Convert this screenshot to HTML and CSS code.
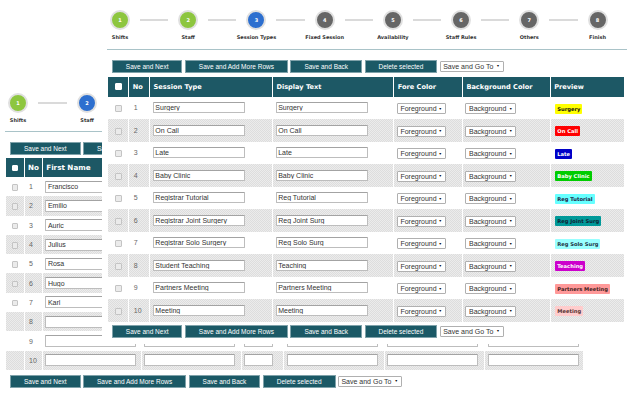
FILE: index.html
```html
<!DOCTYPE html>
<html lang="en">
<head>
    <meta charset="UTF-8">
    <meta name="viewport" content="width=device-width, initial-scale=1.0">
    <title>Setup Wizard - Session Types</title>
    <link rel="stylesheet" href="styles.css">
</head>
<body>
    <!-- Staff step (window behind) -->
    <div class="page">
        <div class="wizard wizard-back">
            <div class="step done"><span class="dot">1</span><span class="step-label">Shifts</span></div>
            <span class="link"></span>
            <div class="step current"><span class="dot">2</span><span class="step-label">Staff</span></div>
            <span class="link"></span>
            <div class="step"><span class="dot">3</span><span class="step-label">Session Types</span></div>
            <span class="link"></span>
            <div class="step"><span class="dot">4</span><span class="step-label">Fixed Session</span></div>
            <span class="link"></span>
            <div class="step"><span class="dot">5</span><span class="step-label">Availability</span></div>
            <span class="link"></span>
            <div class="step"><span class="dot">6</span><span class="step-label">Staff Rules</span></div>
            <span class="link"></span>
            <div class="step"><span class="dot">7</span><span class="step-label">Others</span></div>
            <span class="link"></span>
            <div class="step"><span class="dot">8</span><span class="step-label">Finish</span></div>
        </div>
        <div class="wizard-line wizard-line-back"></div>

        <div class="toolbar toolbar-back-top">
            <button class="btn">Save and Next</button>
            <button class="btn">Save and Add More Rows</button>
            <button class="btn">Save and Back</button>
            <button class="btn">Delete selected</button>
            <span class="dd"><select class="dd-go"><option>Save and Go To</option></select></span>
        </div>

        <table class="grid grid-staff">
            <colgroup>
                <col class="s1"><col class="s2"><col class="s3"><col class="s4">
                <col class="s5"><col class="s6"><col class="s7"><col class="s8">
            </colgroup>
            <tr>
                <th class="check"><input type="checkbox" class="chk chk-head"></th>
                <th>No</th><th>First Name</th><th>Last Name</th><th>Init</th>
                <th>Job Title</th><th>Email</th><th>Phone</th>
            </tr>
            <tr>
                <td class="check"><input type="checkbox" class="chk"></td><td class="num">1</td>
                <td><input type="text" value="Francisco"></td><td><input type="text"></td><td><input type="text" class="sm"></td>
                <td><input type="text"></td><td><input type="text"></td><td><input type="text" class="lg"></td>
            </tr>
            <tr class="alt">
                <td class="check"><input type="checkbox" class="chk"></td><td class="num">2</td>
                <td><input type="text" value="Emilio"></td><td><input type="text"></td><td><input type="text" class="sm"></td>
                <td><input type="text"></td><td><input type="text"></td><td><input type="text" class="lg"></td>
            </tr>
            <tr>
                <td class="check"><input type="checkbox" class="chk"></td><td class="num">3</td>
                <td><input type="text" value="Auric"></td><td><input type="text"></td><td><input type="text" class="sm"></td>
                <td><input type="text"></td><td><input type="text"></td><td><input type="text" class="lg"></td>
            </tr>
            <tr class="alt">
                <td class="check"><input type="checkbox" class="chk"></td><td class="num">4</td>
                <td><input type="text" value="Julius"></td><td><input type="text"></td><td><input type="text" class="sm"></td>
                <td><input type="text"></td><td><input type="text"></td><td><input type="text" class="lg"></td>
            </tr>
            <tr>
                <td class="check"><input type="checkbox" class="chk"></td><td class="num">5</td>
                <td><input type="text" value="Rosa"></td><td><input type="text"></td><td><input type="text" class="sm"></td>
                <td><input type="text"></td><td><input type="text"></td><td><input type="text" class="lg"></td>
            </tr>
            <tr class="alt">
                <td class="check"><input type="checkbox" class="chk"></td><td class="num">6</td>
                <td><input type="text" value="Hugo"></td><td><input type="text"></td><td><input type="text" class="sm"></td>
                <td><input type="text"></td><td><input type="text"></td><td><input type="text" class="lg"></td>
            </tr>
            <tr>
                <td class="check"><input type="checkbox" class="chk"></td><td class="num">7</td>
                <td><input type="text" value="Karl"></td><td><input type="text"></td><td><input type="text" class="sm"></td>
                <td><input type="text"></td><td><input type="text"></td><td><input type="text" class="lg"></td>
            </tr>
            <tr class="alt">
                <td class="check"></td><td class="num">8</td>
                <td><input type="text"></td><td><input type="text"></td><td><input type="text" class="sm"></td>
                <td><input type="text"></td><td><input type="text"></td><td><input type="text" class="lg"></td>
            </tr>
            <tr>
                <td class="check"></td><td class="num">9</td>
                <td><input type="text"></td><td><input type="text"></td><td><input type="text" class="sm"></td>
                <td><input type="text"></td><td><input type="text"></td><td><input type="text" class="lg"></td>
            </tr>
            <tr class="alt">
                <td class="check"></td><td class="num">10</td>
                <td><input type="text"></td><td><input type="text"></td><td><input type="text" class="sm"></td>
                <td><input type="text"></td><td><input type="text"></td><td><input type="text" class="lg"></td>
            </tr>
        </table>

        <div class="toolbar toolbar-back-bottom">
            <button class="btn">Save and Next</button>
            <button class="btn">Save and Add More Rows</button>
            <button class="btn">Save and Back</button>
            <button class="btn">Delete selected</button>
            <span class="dd"><select class="dd-go"><option>Save and Go To</option></select></span>
        </div>
    </div>

    <!-- Session Types step (window in front) -->
    <div class="panel">
        <div class="wizard wizard-main">
            <div class="step done"><span class="dot">1</span><span class="step-label">Shifts</span></div>
            <span class="link"></span>
            <div class="step done"><span class="dot">2</span><span class="step-label">Staff</span></div>
            <span class="link"></span>
            <div class="step current"><span class="dot">3</span><span class="step-label">Session Types</span></div>
            <span class="link"></span>
            <div class="step"><span class="dot">4</span><span class="step-label">Fixed Session</span></div>
            <span class="link"></span>
            <div class="step"><span class="dot">5</span><span class="step-label">Availability</span></div>
            <span class="link"></span>
            <div class="step"><span class="dot">6</span><span class="step-label">Staff Rules</span></div>
            <span class="link"></span>
            <div class="step"><span class="dot">7</span><span class="step-label">Others</span></div>
            <span class="link"></span>
            <div class="step"><span class="dot">8</span><span class="step-label">Finish</span></div>
        </div>
        <div class="wizard-line"></div>

        <div class="toolbar toolbar-top">
            <button class="btn">Save and Next</button>
            <button class="btn">Save and Add More Rows</button>
            <button class="btn">Save and Back</button>
            <button class="btn">Delete selected</button>
            <span class="dd"><select class="dd-go"><option>Save and Go To</option></select></span>
        </div>

        <table class="grid grid-sessions">
            <colgroup>
                <col class="c1"><col class="c2"><col class="c3"><col class="c4">
                <col class="c5"><col class="c6"><col class="c7">
            </colgroup>
            <tr>
                <th class="check"><input type="checkbox" class="chk chk-head"></th>
                <th>No</th>
                <th>Session Type</th>
                <th>Display Text</th>
                <th>Fore Color</th>
                <th>Background Color</th>
                <th>Preview</th>
            </tr>
            <tr>
                <td class="check"><input type="checkbox" class="chk"></td><td class="num">1</td>
                <td><input type="text" value="Surgery"></td><td><input type="text" value="Surgery"></td>
                <td><span class="dd"><select class="dd-fore"><option>Foreground</option></select></span></td>
                <td><span class="dd"><select class="dd-back"><option>Background</option></select></span></td>
                <td><span class="badge" style="background:#ffff00;color:#111;">Surgery</span></td>
            </tr>
            <tr class="alt">
                <td class="check"><input type="checkbox" class="chk"></td><td class="num">2</td>
                <td><input type="text" value="On Call"></td><td><input type="text" value="On Call"></td>
                <td><span class="dd"><select class="dd-fore"><option>Foreground</option></select></span></td>
                <td><span class="dd"><select class="dd-back"><option>Background</option></select></span></td>
                <td><span class="badge" style="background:#ff0000;color:#fff;">On Call</span></td>
            </tr>
            <tr>
                <td class="check"><input type="checkbox" class="chk"></td><td class="num">3</td>
                <td><input type="text" value="Late"></td><td><input type="text" value="Late"></td>
                <td><span class="dd"><select class="dd-fore"><option>Foreground</option></select></span></td>
                <td><span class="dd"><select class="dd-back"><option>Background</option></select></span></td>
                <td><span class="badge" style="background:#0000c8;color:#fff;">Late</span></td>
            </tr>
            <tr class="alt">
                <td class="check"><input type="checkbox" class="chk"></td><td class="num">4</td>
                <td><input type="text" value="Baby Clinic"></td><td><input type="text" value="Baby Clinic"></td>
                <td><span class="dd"><select class="dd-fore"><option>Foreground</option></select></span></td>
                <td><span class="dd"><select class="dd-back"><option>Background</option></select></span></td>
                <td><span class="badge" style="background:#00cc00;color:#fff;">Baby Clinic</span></td>
            </tr>
            <tr>
                <td class="check"><input type="checkbox" class="chk"></td><td class="num">5</td>
                <td><input type="text" value="Registrar Tutorial"></td><td><input type="text" value="Reg Tutorial"></td>
                <td><span class="dd"><select class="dd-fore"><option>Foreground</option></select></span></td>
                <td><span class="dd"><select class="dd-back"><option>Background</option></select></span></td>
                <td><span class="badge" style="background:#66ffff;color:#224;">Reg Tutorial</span></td>
            </tr>
            <tr class="alt">
                <td class="check"><input type="checkbox" class="chk"></td><td class="num">6</td>
                <td><input type="text" value="Registrar Joint Surgery"></td><td><input type="text" value="Reg Joint Surg"></td>
                <td><span class="dd"><select class="dd-fore"><option>Foreground</option></select></span></td>
                <td><span class="dd"><select class="dd-back"><option>Background</option></select></span></td>
                <td><span class="badge" style="background:#009999;color:#123;">Reg Joint Surg</span></td>
            </tr>
            <tr>
                <td class="check"><input type="checkbox" class="chk"></td><td class="num">7</td>
                <td><input type="text" value="Registrar Solo Surgery"></td><td><input type="text" value="Reg Solo Surg"></td>
                <td><span class="dd"><select class="dd-fore"><option>Foreground</option></select></span></td>
                <td><span class="dd"><select class="dd-back"><option>Background</option></select></span></td>
                <td><span class="badge" style="background:#99ffff;color:#234;">Reg Solo Surg</span></td>
            </tr>
            <tr class="alt">
                <td class="check"><input type="checkbox" class="chk"></td><td class="num">8</td>
                <td><input type="text" value="Student Teaching"></td><td><input type="text" value="Teaching"></td>
                <td><span class="dd"><select class="dd-fore"><option>Foreground</option></select></span></td>
                <td><span class="dd"><select class="dd-back"><option>Background</option></select></span></td>
                <td><span class="badge" style="background:#cc00cc;color:#fff;">Teaching</span></td>
            </tr>
            <tr>
                <td class="check"><input type="checkbox" class="chk"></td><td class="num">9</td>
                <td><input type="text" value="Partners Meeting"></td><td><input type="text" value="Partners Meeting"></td>
                <td><span class="dd"><select class="dd-fore"><option>Foreground</option></select></span></td>
                <td><span class="dd"><select class="dd-back"><option>Background</option></select></span></td>
                <td><span class="badge" style="background:#ff9999;color:#422;">Partners Meeting</span></td>
            </tr>
            <tr class="alt">
                <td class="check"><input type="checkbox" class="chk"></td><td class="num">10</td>
                <td><input type="text" value="Meeting"></td><td><input type="text" value="Meeting"></td>
                <td><span class="dd"><select class="dd-fore"><option>Foreground</option></select></span></td>
                <td><span class="dd"><select class="dd-back"><option>Background</option></select></span></td>
                <td><span class="badge" style="background:#ffcccc;color:#533;">Meeting</span></td>
            </tr>
        </table>

        <div class="toolbar toolbar-bottom">
            <button class="btn">Save and Next</button>
            <button class="btn">Save and Add More Rows</button>
            <button class="btn">Save and Back</button>
            <button class="btn">Delete selected</button>
            <span class="dd"><select class="dd-go"><option>Save and Go To</option></select></span>
        </div>
    </div>
</body>
</html>
```

FILE: styles.css
```css
/* General Styles */
* {
    box-sizing: border-box;
}

body {
    margin: 0;
    width: 627px;
    height: 393px;
    overflow: hidden;
    position: relative;
    background-color: #ffffff;
    font-family: 'Liberation Sans', Arial, sans-serif;
    color: #333333;
}

/* Staff page (behind) */
.page {
    padding-top: 93px;
}

/* Session types window (in front) */
.panel {
    position: absolute;
    left: 102px;
    top: 0;
    width: 525px;
    height: 344px;
    padding-top: 10px;
    background-color: #ffffff;
}

/* Wizard steps */
.wizard {
    display: flex;
    align-items: flex-start;
}

.wizard-main {
    width: 513.5px;
}

.wizard-back {
    width: 519px;
}

.step {
    flex: none;
    width: 36px;
    display: flex;
    flex-direction: column;
    align-items: center;
}

.dot {
    width: 20px;
    height: 20px;
    border-radius: 50%;
    border: 2.5px solid #e0e0e0;
    background-color: #666666;
    color: #ffffff;
    font: bold 5px 'DejaVu Sans', sans-serif;
    display: flex;
    align-items: center;
    justify-content: center;
}

.step.done .dot {
    background-color: #8dc63f;
}

.step.current .dot {
    background-color: #2d6fcf;
}

.step-label {
    margin-top: 3.5px;
    font: bold 5px/7px 'DejaVu Sans', sans-serif;
    color: #333333;
    white-space: nowrap;
}

.link {
    flex: 1;
    height: 2px;
    margin: 9px 2px 0;
    background-color: #dadada;
}

.wizard-line {
    height: 1px;
    margin: 8px 0 0 5px;
    background-color: #a9c3c8;
}

.wizard-line-back {
    margin: 7.2px 44px 0 5px;
}

/* Button bars */
.toolbar {
    display: flex;
    gap: 2.4px;
    height: 13.5px;
}

.toolbar-top {
    margin: 10px 0 0 9.8px;
}

.toolbar-bottom {
    margin: 3px 0 0 9.8px;
}

.toolbar-back-top {
    margin: 10.3px 0 0 10px;
}

.toolbar-back-bottom {
    margin: 5px 0 0 10px;
}

.btn {
    height: 13.5px;
    padding: 0 13px;
    border: 1px solid #7fa2aa;
    background-color: #1b5966;
    color: #ffffff;
    font-family: 'Liberation Sans', Arial, sans-serif;
    font-size: 6.5px;
    cursor: pointer;
}

/* Drop downs */
.dd {
    position: relative;
    display: inline-block;
    vertical-align: middle;
}

.dd select {
    appearance: none;
    -webkit-appearance: none;
    display: block;
    height: 11px;
    padding: 0 0 0 2.5px;
    border: 1px solid #b0b0b0;
    border-radius: 1px;
    background-color: #ffffff;
    color: #333333;
    font-family: 'Liberation Sans', Arial, sans-serif;
    font-size: 7px;
    line-height: 9px;
}

.dd::after {
    content: "\25BC";
    position: absolute;
    right: 4px;
    top: 3.5px;
    font-size: 3.5px;
    line-height: 4px;
    color: #111111;
    pointer-events: none;
}

.dd-fore {
    width: 49px;
}

.dd-back {
    width: 51px;
}

.dd-go {
    width: 64px;
    margin-top: 1px;
}

.toolbar .dd {
    vertical-align: top;
}

.toolbar .dd::after {
    top: 4.5px;
}

/* Grids */
.grid {
    table-layout: fixed;
    border-collapse: separate;
}

.grid th {
    height: 20px;
    padding: 0 0 0 3.5px;
    background-color: #1d5865;
    color: #ffffff;
    font: bold 6.6px 'DejaVu Sans', sans-serif;
    text-align: left;
    white-space: nowrap;
    overflow: hidden;
}

.grid td {
    padding: 0 0 0 2.6px;
    vertical-align: middle;
    white-space: nowrap;
    overflow: hidden;
}

.grid tr.alt td {
    background: repeating-conic-gradient(#dddddd 0 25%, #ececec 0 50%) 0 0 / 2px 2px;
}

.grid .check {
    padding: 0;
    text-align: center;
}

.grid .num {
    padding-left: 4.5px;
    font-size: 7px;
    color: #666666;
}

.grid input[type="text"] {
    display: block;
    width: 92px;
    height: 11px;
    padding: 0 0 0 1.7px;
    border: 1px solid #bdbdbd;
    border-top-color: #a3a3a3;
    border-radius: 1px;
    background-color: #ffffff;
    color: #333333;
    font-family: 'Liberation Sans', Arial, sans-serif;
    font-size: 7px;
    line-height: 9px;
}

.chk {
    appearance: none;
    -webkit-appearance: none;
    display: inline-block;
    vertical-align: middle;
    width: 7px;
    height: 7px;
    margin: 0;
    border: 1px solid #c4c4c4;
    border-radius: 1px;
    background-color: #ebebeb;
}

.chk-head {
    border-color: #ffffff;
    background-color: #ffffff;
}

/* Session types grid */
.grid-sessions {
    width: 518.7px;
    margin: 3.5px 0 0 4.8px;
    border-spacing: 1.6px 0;
}

.grid-sessions td {
    height: 22.5px;
}

.grid-sessions .c1 { width: 20.3px; }
.grid-sessions .c2 { width: 19.6px; }
.grid-sessions .c3 { width: 120.6px; }
.grid-sessions .c4 { width: 119.2px; }
.grid-sessions .c5 { width: 66.9px; }
.grid-sessions .c6 { width: 85.9px; }
.grid-sessions .c7 { width: 73px; }

.badge {
    display: inline-block;
    vertical-align: middle;
    height: 10px;
    margin-left: 2px;
    padding: 0 2px;
    border-radius: 1px;
    font: bold 5.2px/10px 'DejaVu Sans', sans-serif;
}

/* Staff grid */
.grid-staff {
    width: 579.3px;
    margin: 2.5px 0 0 5.2px;
    border-spacing: 1.5px 0;
}

.grid-staff th {
    height: 19px;
    font-size: 7.2px;
}

.grid-staff td {
    height: 19.3px;
    padding-left: 2.5px;
}

.grid-staff input[type="text"] {
    width: 91px;
    height: 12px;
    line-height: 10px;
}

.grid-staff input.sm {
    width: 29px;
}

.grid-staff .chk {
    width: 6.5px;
    height: 6.5px;
}

.grid-staff .s1 { width: 17.3px; }
.grid-staff .s2 { width: 17px; }
.grid-staff .s3 { width: 97px; }
.grid-staff .s4 { width: 98.5px; }
.grid-staff .s5 { width: 41px; }
.grid-staff .s6 { width: 99px; }
.grid-staff .s7 { width: 98.5px; }
.grid-staff .s8 { width: 97.5px; }
```
